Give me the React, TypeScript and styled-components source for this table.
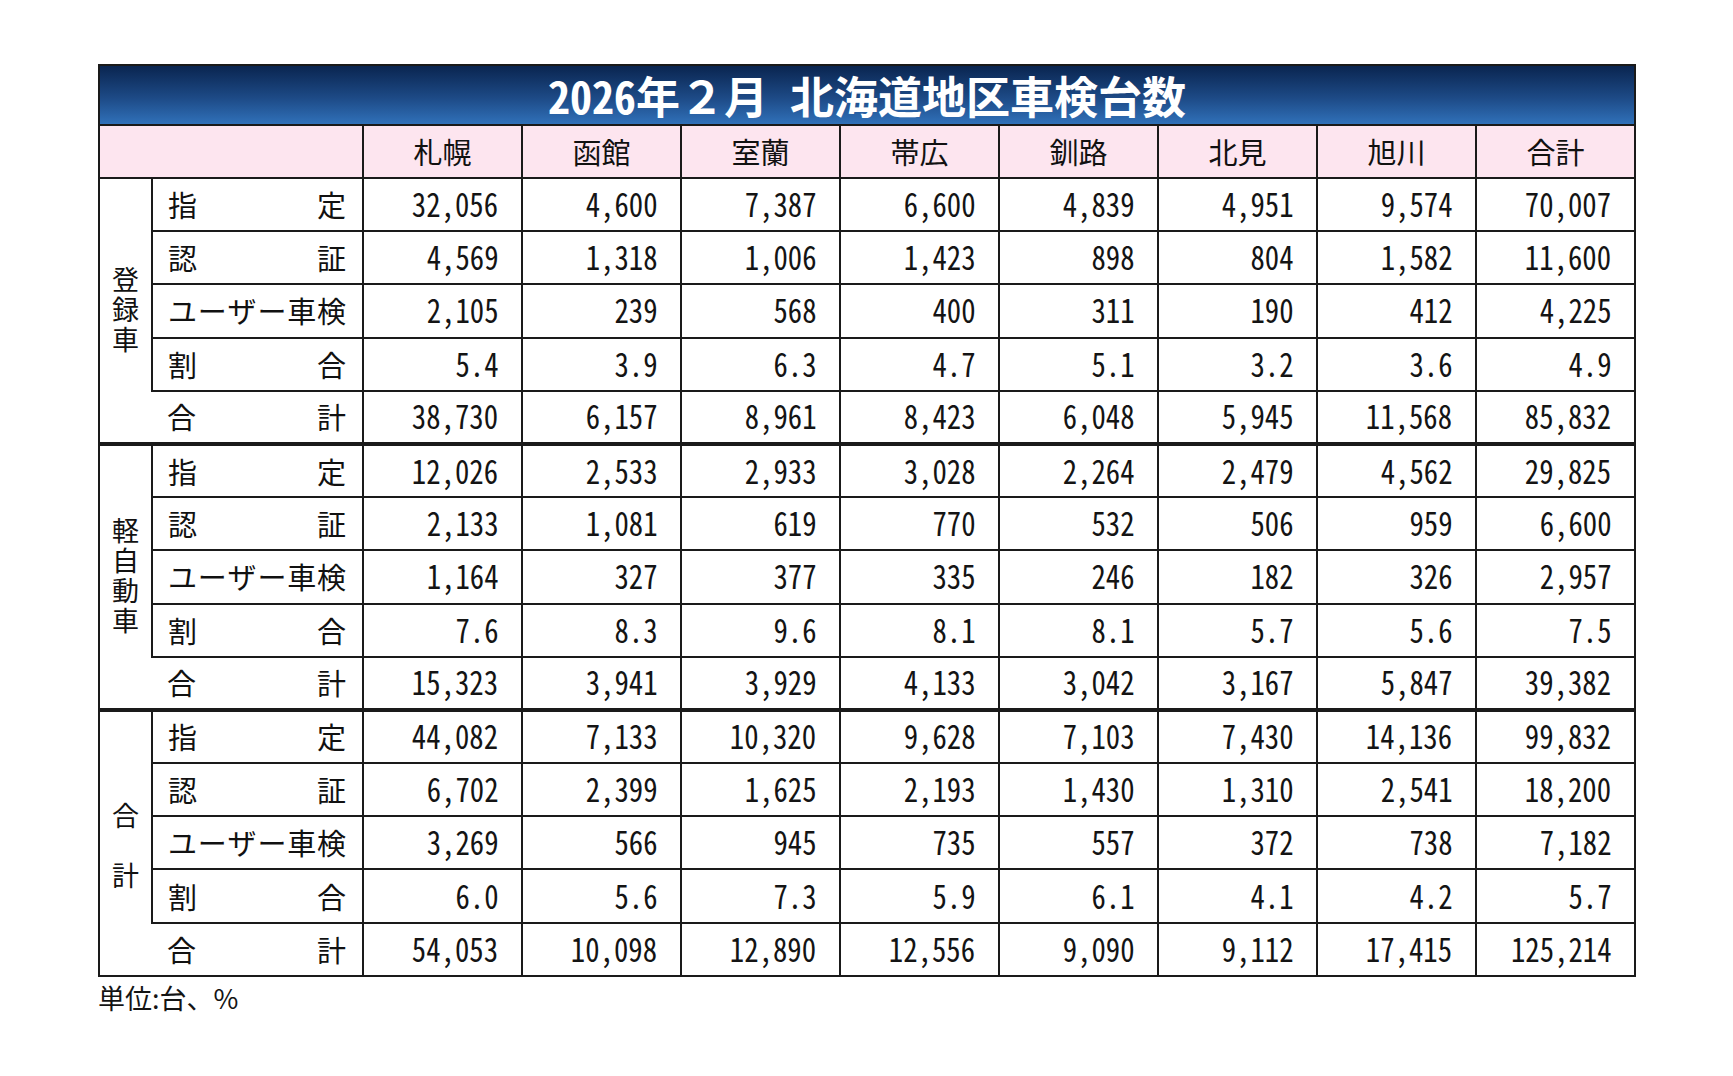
import React from "react";
import styled, { createGlobalStyle } from "styled-components";

const GlobalStyle = createGlobalStyle`
  html, body { margin: 0; padding: 0; background: #ffffff; }
  body {
    font-family: "Noto Sans CJK JP", "Noto Sans", sans-serif;
    color: #111111;
  }
`;

const Page = styled.div`
  display: flex;
  flex-direction: column;
  align-items: flex-start;
  padding: 64px 0 0 98px;
`;

const Table = styled.table`
  border-collapse: collapse;
  table-layout: fixed;
  width: 1536px;
  border: 2px solid #1a1a1a;
`;

const Row = styled.tr<{ $h?: number }>`
  height: ${(p) => p.$h ?? 53.2}px;
`;

const TitleCell = styled.th`
  padding: 0;
  border: 2px solid #1a1a1a;
  background: linear-gradient(to bottom, #0a2550 0%, #1d4a86 55%, #3071b9 100%);
  color: #ffffff;
  font-size: 44px;
  font-weight: 700;
  line-height: 1;
  text-align: center;
`;

const Narrow = styled.span`
  font-feature-settings: "hwid";
`;

const HeadCell = styled.th`
  padding: 0;
  border: 2px solid #1a1a1a;
  background: #fde5ef;
  font-size: 29px;
  font-weight: 400;
  text-align: center;
  line-height: 1;
`;

const cellBorder = (thick?: boolean) =>
  `border: 2px solid #1a1a1a; ${thick ? "border-top-width: 4px;" : ""}`;

const GroupCell = styled.td<{ $thick?: boolean }>`
  padding: 0;
  ${(p) => cellBorder(p.$thick)}
  vertical-align: middle;
  text-align: center;
`;

const GroupText = styled.div<{ $spacing: number; $nudge: number }>`
  display: inline-block;
  writing-mode: vertical-rl;
  text-orientation: upright;
  font-size: 27px;
  line-height: 1;
  letter-spacing: ${(p) => p.$spacing}px;
  padding-top: ${(p) => p.$spacing + p.$nudge}px;
`;

const ItemCell = styled.td<{ $thick?: boolean; $open?: boolean }>`
  padding: 0 16px 0 15px;
  ${(p) => cellBorder(p.$thick)}
  ${(p) => (p.$open ? "border-left: hidden;" : "")}
`;

const ItemInner = styled.div`
  display: flex;
  justify-content: space-between;
  align-items: center;
  font-size: 29px;
  line-height: 1;
`;

const NumCell = styled.td<{ $thick?: boolean }>`
  padding: 0 23px 0 0;
  ${(p) => cellBorder(p.$thick)}
  text-align: right;
`;

const NumText = styled.span`
  display: inline-block;
  font-size: 33px;
  font-weight: 400;
  line-height: 1;
  font-feature-settings: "hwid";
  transform: scaleX(0.87);
  transform-origin: right center;
  color: #141414;
`;

const Note = styled.div`
  margin-top: 4px;
  font-size: 27px;
  line-height: 34px;
  color: #141414;
`;

const cities = ["札幌", "函館", "室蘭", "帯広", "釧路", "北見", "旭川", "合計"];

type Group = {
  name: string;
  spacing: number;
  nudge: number;
  rows: { label: string; values: string[] }[];
};

const groups: Group[] = [
  {
    name: "登録車",
    spacing: 3,
    nudge: 4,
    rows: [
      { label: "指定", values: ["32,056", "4,600", "7,387", "6,600", "4,839", "4,951", "9,574", "70,007"] },
      { label: "認証", values: ["4,569", "1,318", "1,006", "1,423", "898", "804", "1,582", "11,600"] },
      { label: "ユーザー車検", values: ["2,105", "239", "568", "400", "311", "190", "412", "4,225"] },
      { label: "割合", values: ["5.4", "3.9", "6.3", "4.7", "5.1", "3.2", "3.6", "4.9"] },
      { label: "合計", values: ["38,730", "6,157", "8,961", "8,423", "6,048", "5,945", "11,568", "85,832"] },
    ],
  },
  {
    name: "軽自動車",
    spacing: 3,
    nudge: 2,
    rows: [
      { label: "指定", values: ["12,026", "2,533", "2,933", "3,028", "2,264", "2,479", "4,562", "29,825"] },
      { label: "認証", values: ["2,133", "1,081", "619", "770", "532", "506", "959", "6,600"] },
      { label: "ユーザー車検", values: ["1,164", "327", "377", "335", "246", "182", "326", "2,957"] },
      { label: "割合", values: ["7.6", "8.3", "9.6", "8.1", "8.1", "5.7", "5.6", "7.5"] },
      { label: "合計", values: ["15,323", "3,941", "3,929", "4,133", "3,042", "3,167", "5,847", "39,382"] },
    ],
  },
  {
    name: "合計",
    spacing: 33,
    nudge: 9,
    rows: [
      { label: "指定", values: ["44,082", "7,133", "10,320", "9,628", "7,103", "7,430", "14,136", "99,832"] },
      { label: "認証", values: ["6,702", "2,399", "1,625", "2,193", "1,430", "1,310", "2,541", "18,200"] },
      { label: "ユーザー車検", values: ["3,269", "566", "945", "735", "557", "372", "738", "7,182"] },
      { label: "割合", values: ["6.0", "5.6", "7.3", "5.9", "6.1", "4.1", "4.2", "5.7"] },
      { label: "合計", values: ["54,053", "10,098", "12,890", "12,556", "9,090", "9,112", "17,415", "125,214"] },
    ],
  },
];

const Label = ({ text }: { text: string }) => (
  <ItemInner>
    {Array.from(text).map((c, i) => (
      <span key={i}>{c}</span>
    ))}
  </ItemInner>
);

export default function App() {
  return (
    <>
      <GlobalStyle />
      <Page>
        <Table>
          <colgroup>
            <col style={{ width: 53 }} />
            <col style={{ width: 211 }} />
            {cities.map((c) => (
              <col key={c} style={{ width: 159 }} />
            ))}
          </colgroup>
          <thead>
            <Row $h={60}>
              <TitleCell colSpan={10}>
                <Narrow>2026</Narrow>年２月{"\u2002"}北海道地区車検台数
              </TitleCell>
            </Row>
            <Row $h={53}>
              <HeadCell colSpan={2} />
              {cities.map((c) => (
                <HeadCell key={c}>{c}</HeadCell>
              ))}
            </Row>
          </thead>
          <tbody>
            {groups.map((g, gi) =>
              g.rows.map((r, ri) => {
                const thick = gi > 0 && ri === 0;
                const isTotal = ri === g.rows.length - 1;
                return (
                  <Row key={`${gi}-${ri}`}>
                    {ri === 0 && (
                      <GroupCell rowSpan={g.rows.length} $thick={thick}>
                        <GroupText $spacing={g.spacing} $nudge={g.nudge}>
                          {g.name}
                        </GroupText>
                      </GroupCell>
                    )}
                    <ItemCell $thick={thick} $open={isTotal}>
                      <Label text={r.label} />
                    </ItemCell>
                    {r.values.map((v, vi) => (
                      <NumCell key={vi} $thick={thick}>
                        <NumText>{v}</NumText>
                      </NumCell>
                    ))}
                  </Row>
                );
              })
            )}
          </tbody>
        </Table>
        <Note>単位:台、%</Note>
      </Page>
    </>
  );
}
